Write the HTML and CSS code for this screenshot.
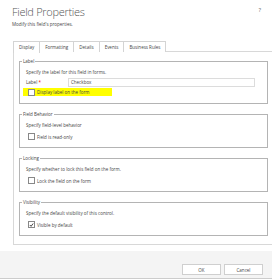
FILE: index.html
```html
<!DOCTYPE html>
<html lang="en">
<head>
    <meta charset="UTF-8">
    <meta name="viewport" content="width=device-width, initial-scale=1.0">
    <title>Field Properties</title>
    <link rel="stylesheet" href="styles.css">
</head>
<body>
    <header class="head">
        <div>
            <h1 class="title">Field Properties</h1>
            <p class="subtitle">Modify this field's properties.</p>
        </div>
        <span class="help">?</span>
    </header>
    <div class="tabs">
        <span class="tab active">Display</span>
        <span class="tab">Formatting</span>
        <span class="tab">Details</span>
        <span class="tab">Events</span>
        <span class="tab">Business Rules</span>
    </div>
    <div class="panel">
        <fieldset class="group">
            <legend>Label</legend>
            <p class="hint">Specify the label for this field in forms.</p>
            <div class="field-row">
                <span class="field-label">Label <span class="req">*</span></span>
                <span class="input">Checkbox</span>
            </div>
            <label class="check marked"><span class="box"></span>Display label on the form</label>
        </fieldset>
        <fieldset class="group">
            <legend>Field Behavior</legend>
            <p class="hint">Specify field-level behavior</p>
            <label class="check"><span class="box"></span>Field is read-only</label>
        </fieldset>
        <fieldset class="group">
            <legend>Locking</legend>
            <p class="hint">Specify whether to lock this field on the form.</p>
            <label class="check"><span class="box"></span>Lock the field on the form</label>
        </fieldset>
        <fieldset class="group">
            <legend>Visibility</legend>
            <p class="hint">Specify the default visibility of this control.</p>
            <label class="check"><span class="box"><svg viewBox="0 0 6 6" width="6" height="6"><path d="M1 3 L2.5 4.6 L5 1.2" fill="none" stroke="#222" stroke-width="1"/></svg></span>Visible by default</label>
        </fieldset>
    </div>
    <footer class="foot">
        <button class="btn">OK</button>
        <button class="btn">Cancel</button>
    </footer>
</body>
</html>
```

FILE: styles.css
```css
html, body {
    margin: 0;
    padding: 0;
}
body {
    height: 280px;
    display: flex;
    flex-direction: column;
    background-color: #fff;
    color: #444;
    font-family: "Open Sans", "Noto Sans", sans-serif;
    font-size: 4.5px;
}
.head {
    display: flex;
    justify-content: space-between;
    padding: 6px 11px 0 12px;
}
.title {
    margin: 0;
    font-size: 11px;
    line-height: 12px;
    font-weight: 300;
    letter-spacing: -0.3px;
    color: #555;
}
.subtitle {
    margin: 3px 0 0;
    line-height: 7px;
}
.help {
    font-size: 6px;
    line-height: 7px;
    color: #666;
    margin-top: 1px;
}
.tabs {
    display: flex;
    margin: 13px 0 0 13px;
    position: relative;
    z-index: 1;
}
.tab {
    height: 10px;
    line-height: 10px;
    padding: 0 5px;
    border: 1px solid #d4d4d4;
    border-bottom: none;
    margin-right: -1px;
    background-color: #fff;
}
.tab.active {
    height: 11px;
    margin-bottom: -1px;
}
.panel {
    width: 249px;
    margin-left: 13px;
    padding: 5px 6px 8px 5px;
    border: 1px solid #d8d8d8;
    margin-top: -1px;
}
.group {
    margin: 0 0 6px;
    padding: 2px 6px 5px;
    border: 1px solid #b4b4b4;
    min-width: 0;
}
.group:last-child {
    margin-bottom: 0;
}
.group legend {
    margin-left: -4px;
    padding: 0 1px;
    line-height: 8px;
}
.hint {
    margin: 0;
    line-height: 11px;
}
.group:first-child .hint {
    line-height: 10px;
}
.field-row {
    display: flex;
    align-items: center;
    height: 10px;
}
.field-label {
    width: 42px;
}
.req {
    color: #e00;
}
.input {
    flex: 1;
    height: 7px;
    line-height: 7px;
    border: 1px solid #dcdcdc;
    padding-left: 2px;
    margin-right: 6px;
}
.check {
    display: flex;
    align-items: center;
    height: 11px;
}
.box {
    width: 5px;
    height: 5px;
    border: 1px solid #888;
    margin: 0 2px;
    display: flex;
    align-items: center;
    justify-content: center;
    background-color: #fff;
}
.box svg {
    display: block;
}
.check.marked {
    width: 86px;
    height: 8px;
    margin: 1px 0 2px -3px;
    padding-left: 3px;
    background-color: #ffff00;
}
.foot {
    margin-top: auto;
    margin-bottom: 1px;
    height: 28px;
    box-sizing: border-box;
    background-color: #f4f4f4;
    border-bottom: 1px solid #cccccc;
    display: flex;
    justify-content: flex-end;
    align-items: flex-start;
    gap: 3px;
    padding: 13px 9px 0 0;
}
.btn {
    width: 39px;
    height: 11px;
    padding: 0;
    border: 1px solid #cfcfcf;
    background-color: #fff;
    color: #444;
    font-family: "Open Sans", "Noto Sans", sans-serif;
    font-size: 4.5px;
}
```
